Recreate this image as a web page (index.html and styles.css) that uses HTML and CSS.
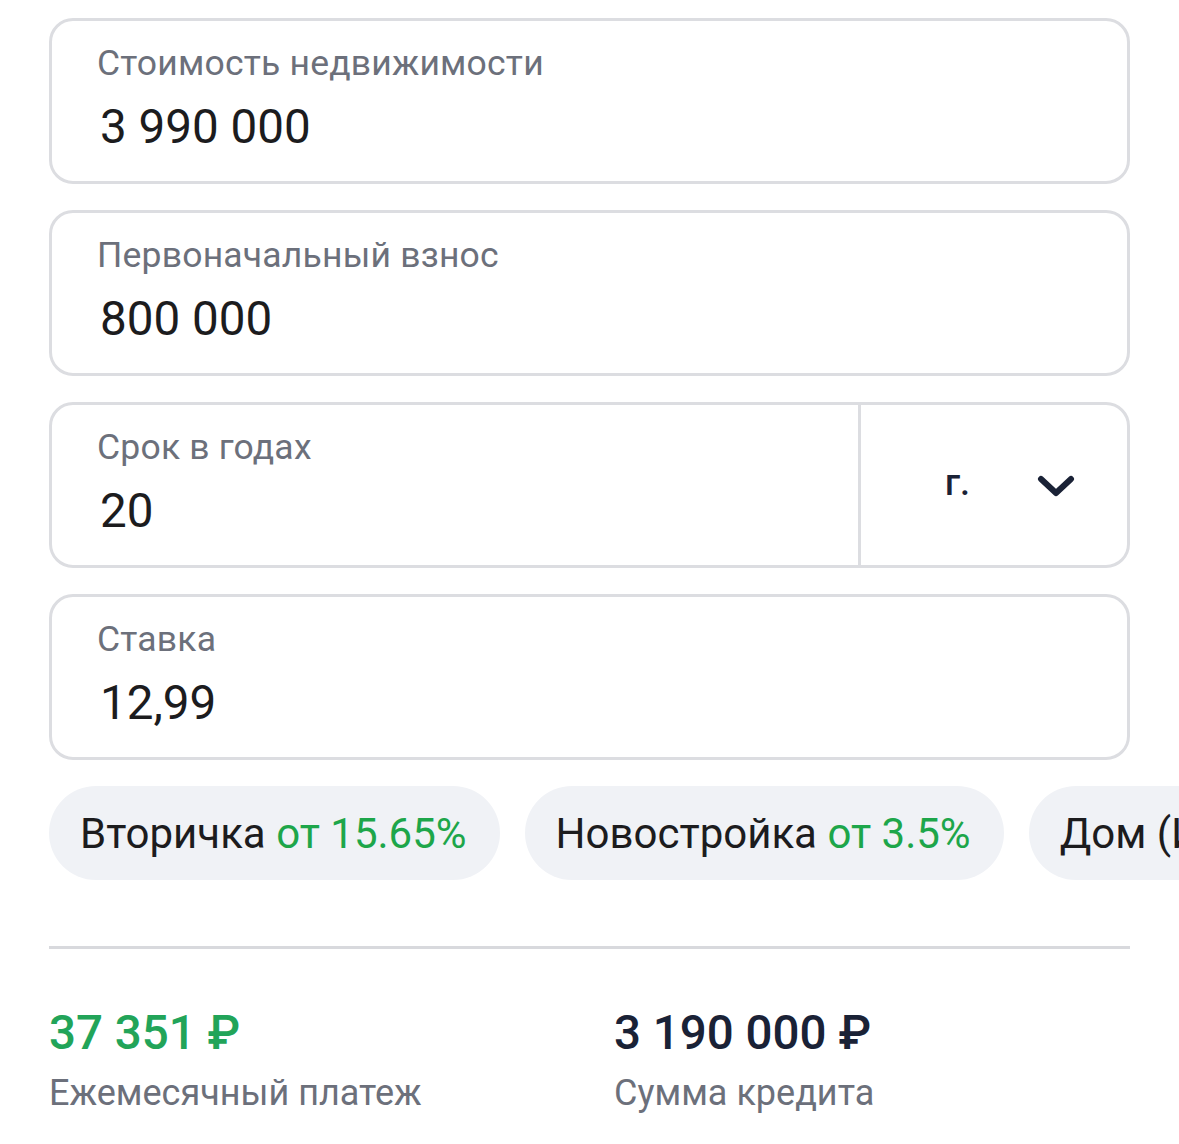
FILE: index.html
```html
<!DOCTYPE html>
<html lang="ru">
<head>
<meta charset="utf-8">
<link rel="stylesheet" href="styles.css">
</head>
<body>
<main class="calc">
  <div class="field">
    <div class="field-main">
      <div class="label">Стоимость недвижимости</div>
      <div class="value">3 990 000</div>
    </div>
  </div>
  <div class="field">
    <div class="field-main">
      <div class="label">Первоначальный взнос</div>
      <div class="value">800 000</div>
    </div>
  </div>
  <div class="field field-split">
    <div class="field-main">
      <div class="label">Срок в годах</div>
      <div class="value">20</div>
    </div>
    <div class="unit">
      <span class="unit-text">г.</span>
      <svg class="chevron" width="38" height="24" viewBox="0 0 38 24"><path d="M4 4 L19 18 L34 4" fill="none" stroke="#1a2236" stroke-width="6" stroke-linecap="round" stroke-linejoin="round"/></svg>
    </div>
  </div>
  <div class="field">
    <div class="field-main">
      <div class="label">Ставка</div>
      <div class="value">12,99</div>
    </div>
  </div>

  <div class="chips">
    <div class="chip">Вторичка <span class="green">от 15.65%</span></div>
    <div class="chip">Новостройка <span class="green">от 3.5%</span></div>
    <div class="chip">Дом (ИЖС) <span class="green">от 6%</span></div>
  </div>

  <hr class="divider">

  <div class="results">
    <div class="result">
      <div class="amount amount-green">37 351 ₽</div>
      <div class="caption">Ежемесячный платеж</div>
    </div>
    <div class="result">
      <div class="amount">3 190 000 ₽</div>
      <div class="caption">Сумма кредита</div>
    </div>
  </div>
</main>
</body>
</html>
```

FILE: styles.css
```css
html, body {
  margin: 0;
  padding: 0;
  background: #ffffff;
  overflow: hidden;
}
body {
  font-family: Roboto, "Liberation Sans", sans-serif;
  color: #1c1c1e;
}
.calc {
  width: 1081px;
  margin-left: 49px;
  padding-top: 18px;
  display: flex;
  flex-direction: column;
}
.field {
  height: 166px;
  box-sizing: border-box;
  border: 3px solid #dcdde1;
  border-radius: 24px;
  margin-bottom: 26px;
  display: flex;
}
.field-main {
  flex: 1;
  box-sizing: border-box;
  padding: 22px 0 0 45px;
  display: flex;
  flex-direction: column;
}
.label {
  font-size: 35.5px;
  line-height: 40px;
  color: #6c707b;
  letter-spacing: 0.2px;
}
.value {
  font-size: 47.6px;
  line-height: 56px;
  margin-top: 16px;
  color: #1c1c1e;
  padding-left: 3px;
}
.field-split .field-main {
  flex: 0 0 809px;
  border-right: 3px solid #dcdde1;
}
.unit {
  flex: 1;
  display: flex;
  align-items: center;
  padding-left: 84px;
  padding-bottom: 4px;
}
.unit-text {
  font-size: 36px;
  font-weight: 500;
  color: #1a2236;
  width: 92px;
}
.chevron {
  display: block;
  margin-top: 8px;
}
.chips {
  display: flex;
  gap: 25px;
  margin-right: -49px;
  overflow: hidden;
  white-space: nowrap;
}
.chip {
  flex: none;
  height: 94px;
  box-sizing: border-box;
  padding: 0 33px 0 31px;
  border-radius: 47px;
  background: #f0f2f6;
  display: flex;
  align-items: center;
  gap: 0.25em;
  font-size: 42px;
  color: #1c1c1e;
}
.green {
  color: #1da64a;
}
.divider {
  margin: 66px 0 0;
  border: none;
  height: 3px;
  background: #d8d9dd;
}
.results {
  display: grid;
  grid-template-columns: 516px 516px;
  column-gap: 49px;
  margin-top: 56px;
}
.amount {
  font-size: 47.5px;
  line-height: 56px;
  font-weight: 500;
  color: #1a2236;
}
.amount-green {
  color: #22a459;
}
.caption {
  font-size: 36px;
  line-height: 40px;
  margin-top: 12px;
  color: #6c707b;
}
```
